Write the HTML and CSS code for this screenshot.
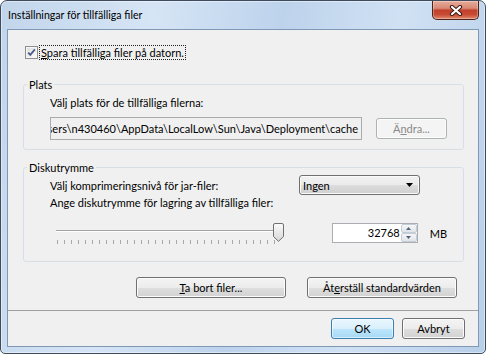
FILE: index.html
```html
<!DOCTYPE html>
<html lang="sv">
  <head>
    <meta charset="UTF-8" />
    <title>Inställningar för tillfälliga filer</title>
    <link rel="stylesheet" href="styles.css">
  </head>
  <body>
    <!-- Dialog window -->
    <div class="window">
      <div class="titlebar">
        <span class="title">Inställningar för tillfälliga filer</span>
        <button class="close-btn" aria-label="Stäng">
          <svg width="14" height="11" viewBox="0 0 14 11">
            <path d="M3 2L11 9M11 2L3 9" stroke="#3b1a14" stroke-width="4.2" stroke-linecap="round" />
            <path d="M3 2L11 9M11 2L3 9" stroke="#ffffff" stroke-width="2.2" stroke-linecap="round" />
          </svg>
        </button>
      </div>

      <div class="client">
        <!-- Keep files checkbox -->
        <label class="check-row">
          <span class="checkbox">
            <svg width="11" height="11" viewBox="0 0 11 11">
              <path d="M2.2 5.6L4.3 7.9L8.9 2.4" fill="none" stroke="#4a5f88" stroke-width="1.8" />
            </svg>
          </span>
          <span class="check-label"><u>S</u>para tillfälliga filer på datorn.</span>
        </label>

        <!-- Location group -->
        <fieldset class="group group-location">
          <legend>Plats</legend>
          <div class="group-body">
            <div class="text-line">Välj plats för de tillfälliga filerna:</div>
            <div class="path-row">
              <div class="path-field"><span>Users\n430460\AppData\LocalLow\Sun\Java\Deployment\cache</span></div>
              <button class="btn btn-change" disabled>Ä<u>n</u>dra...</button>
            </div>
          </div>
        </fieldset>

        <!-- Disk space group -->
        <fieldset class="group group-disk">
          <legend>Diskutrymme</legend>
          <div class="group-body">
            <div class="row">
              <span class="row-label">Välj komprimeringsnivå för jar-filer:</span>
              <div class="combo">
                <span>Ingen</span>
                <svg width="7" height="4" viewBox="0 0 7 4"><path d="M0 0H7L3.5 4Z" fill="#000" /></svg>
              </div>
            </div>
            <div class="text-line">Ange diskutrymme för lagring av tillfälliga filer:</div>
            <div class="slider-row">
              <div class="slider">
                <div class="track"></div>
                <div class="ticks"></div>
                <svg class="thumb" width="11" height="19" viewBox="0 0 11 19">
                  <defs>
                    <linearGradient id="thumb-fill" x1="0" y1="0" x2="0" y2="1">
                      <stop offset="0" stop-color="#fbfbfb" />
                      <stop offset="1" stop-color="#d6d6d6" />
                    </linearGradient>
                  </defs>
                  <path d="M2 0.5H9A1.5 1.5 0 0 1 10.5 2V13.5L5.5 18.3L0.5 13.5V2A1.5 1.5 0 0 1 2 0.5Z" fill="url(#thumb-fill)" stroke="#707070" />
                </svg>
              </div>
              <div class="spin">
                <span class="spin-value">32768</span>
                <div class="spin-btns">
                  <span class="spin-btn">
                    <svg width="5" height="3" viewBox="0 0 5 3"><path d="M0 3H5L2.5 0Z" fill="#4d6185" /></svg>
                  </span>
                  <span class="spin-btn">
                    <svg width="5" height="3" viewBox="0 0 5 3"><path d="M0 0H5L2.5 3Z" fill="#4d6185" /></svg>
                  </span>
                </div>
              </div>
              <span class="unit">MB</span>
            </div>
          </div>
        </fieldset>

        <!-- Cache actions -->
        <div class="actions">
          <button class="btn btn-wide"><u>T</u>a bort filer...</button>
          <button class="btn btn-wide">Åt<u>e</u>rställ standardvärden</button>
        </div>

        <!-- Dialog buttons -->
        <div class="footer">
          <button class="btn btn-dialog btn-default">OK</button>
          <button class="btn btn-dialog">Avbryt</button>
        </div>
      </div>
    </div>
  </body>
</html>
```

FILE: styles.css
```css
/* Reset and base styles */
* {
  margin: 0;
  padding: 0;
  box-sizing: border-box;
}

body {
  background-color: #ffffff;
  font-family: Lato, "Liberation Sans", sans-serif;
  font-size: 11px;
  line-height: 15px;
  color: #000000;
}

u {
  text-decoration: underline;
  text-underline-offset: 1px;
}

/* Window frame */
.window {
  width: 486px;
  height: 354px;
  border: 1px solid #3e4b5c;
  border-radius: 7px 7px 5px 5px;
  background: linear-gradient(100deg, #c1d5eb 0%, #d6e5f5 28%, #bdd3ec 52%, #d0e1f3 74%, #b8cfe9 100%);
  box-shadow: inset 0 0 0 1px rgba(255, 255, 255, 0.45);
  display: flex;
  flex-direction: column;
  overflow: hidden;
}

.titlebar {
  height: 28px;
  display: flex;
  justify-content: space-between;
  align-items: flex-start;
}

.title {
  padding: 7px 0 0 7px;
  font-size: 10.6px;
}

.close-btn {
  width: 47px;
  height: 19px;
  margin-right: 6px;
  border: 1px solid #4f2119;
  border-top: none;
  border-radius: 0 0 5px 5px;
  background: linear-gradient(#e8ab9c 0%, #d98a75 40%, #c2402b 52%, #c84a33 75%, #e08b6e 100%);
  box-shadow: inset 0 0 0 1px rgba(255, 255, 255, 0.3);
  display: flex;
  align-items: center;
  justify-content: center;
}

.client {
  flex: 1;
  margin: 0 6px 6px;
  border: 1px solid #7f98b5;
  background-color: #f0f0f0;
  display: flex;
  flex-direction: column;
}

/* Checkbox row */
.check-row {
  align-self: flex-start;
  height: 16px;
  margin: 14px 0 0 17px;
  display: flex;
  align-items: center;
}

.checkbox {
  width: 13px;
  height: 13px;
  border: 1px solid #8e8f8f;
  background: linear-gradient(135deg, #dcdcdc, #fdfdfd);
  box-shadow: inset 0 0 0 1px #f5f5f5;
  display: flex;
  align-items: center;
  justify-content: center;
}

.check-label {
  margin-left: 1px;
  padding: 0 1px;
  border: 1px dotted #202020;
  line-height: 13px;
}

/* Group boxes */
.group {
  min-width: 0;
  margin: 17px 14px 0 15px;
  border: 1px solid #d5dfe5;
  border-radius: 3px;
}

.group legend {
  margin-left: 3px;
  padding: 0 2px;
  line-height: 15px;
}

.group-disk {
  margin-top: 10px;
}

.group-location .group-body {
  padding: 3px 16px 9px 26px;
}

.group-disk .group-body {
  padding: 0 16px 16px 26px;
}

.text-line {
  height: 15px;
  white-space: nowrap;
}

.path-row {
  margin-top: 7px;
  display: flex;
  align-items: flex-start;
  gap: 14px;
}

.path-field {
  width: 312px;
  height: 23px;
  padding: 0 3px;
  border: 1px solid #a9abad;
  background-color: #f0f0f0;
  display: flex;
  align-items: center;
  justify-content: flex-end;
  overflow: hidden;
  white-space: nowrap;
}

.path-field span {
  flex-shrink: 0;
}

.row {
  height: 20px;
  display: flex;
  align-items: center;
}

.row-label {
  width: 249px;
}

.combo {
  width: 121px;
  height: 20px;
  padding: 0 6px 0 3px;
  border: 1px solid #707070;
  border-radius: 3px;
  background: linear-gradient(#f2f2f2 0%, #ebebeb 50%, #dddddd 51%, #cfcfcf 100%);
  box-shadow: inset 0 0 0 1px #fbfbfb;
  display: flex;
  align-items: center;
  justify-content: space-between;
}

/* Slider */
.slider-row {
  height: 24px;
  margin-top: 11px;
  display: flex;
  align-items: center;
}

.slider {
  position: relative;
  width: 229px;
  height: 24px;
  margin-left: 5px;
}

.track {
  height: 2px;
  margin: 9px 1px 0;
  border-top: 1px solid #a3a3a3;
  background-color: #ffffff;
}

.ticks {
  height: 4px;
  margin: 8px 0 0 2px;
  width: 222px;
  background: repeating-linear-gradient(to right, #a8a8a8 0 1px, transparent 1px 7px);
}

.thumb {
  position: absolute;
  left: 218px;
  top: 2px;
}

.spin {
  width: 86px;
  height: 20px;
  margin-left: 50px;
  border: 1px solid #abadb3;
  background-color: #ffffff;
  display: flex;
}

.spin-value {
  flex: 1;
  padding-right: 1px;
  text-align: right;
  line-height: 18px;
}

.spin-btns {
  width: 16px;
  display: flex;
  flex-direction: column;
}

.spin-btn {
  flex: 1;
  border: 1px solid #c3cdd8;
  border-radius: 2px;
  background: linear-gradient(#f6f6f6, #e2e4e8);
  display: flex;
  align-items: center;
  justify-content: center;
}

.unit {
  margin-left: 12px;
}

/* Button styles */
.btn {
  height: 21px;
  border: 1px solid #707070;
  border-radius: 3px;
  background: linear-gradient(#f4f4f4 0%, #ececec 50%, #dedede 51%, #d2d2d2 100%);
  box-shadow: inset 0 0 0 1px #fcfcfc;
  font: inherit;
  color: #000000;
  white-space: nowrap;
}

.btn-change {
  width: 71px;
  margin-top: 1px;
  border-color: #adb2b5;
  background: #f4f4f4;
  color: #8a8a8a;
}

.btn-wide {
  width: 150px;
}

.btn-dialog {
  width: 63px;
}

.btn-default {
  border-color: #3c7fb1;
  background: linear-gradient(#eaf6fd 0%, #d9f0fc 50%, #bee6fd 51%, #a7d9f5 100%);
  box-shadow: inset 0 0 0 1px rgba(255, 255, 255, 0.55);
}

.actions {
  margin-top: 15px;
  padding-right: 21px;
  display: flex;
  justify-content: flex-end;
  gap: 21px;
}

.footer {
  height: 36px;
  margin-top: auto;
  padding: 7px 13px 0 0;
  border-top: 1px solid #a0a0a0;
  display: flex;
  justify-content: flex-end;
  gap: 8px;
}
```
